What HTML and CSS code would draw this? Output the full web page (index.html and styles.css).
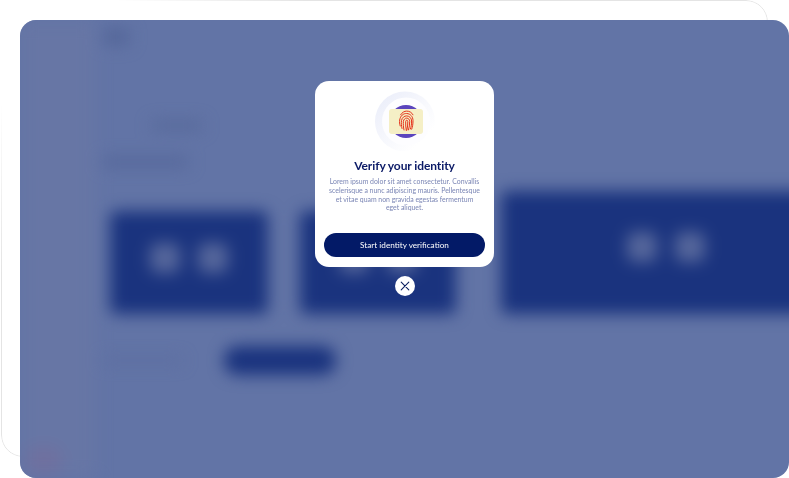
FILE: index.html
```html
<!DOCTYPE html>
<html lang="en">
<head>
<meta charset="utf-8">
<title>Verify your identity</title>
<link rel="stylesheet" href="styles.css">
</head>
<body>
<div class="frame"></div>
<div class="panel">
  <div class="scene" aria-hidden="true">
    <div class="side"><div class="side-dot"></div></div>
    <div class="main">
      <div class="logo"></div>
      <div class="tab"></div>
      <div class="heading"></div>
      <div class="cards">
        <div class="card card-one"><i></i><i></i></div>
        <div class="card card-two"><i></i><i></i></div>
        <div class="card card-three"><i></i><i></i></div>
      </div>
      <div class="actions">
        <div class="hint"></div>
        <div class="cta"></div>
      </div>
    </div>
  </div>
  <div class="dialog-wrap">
    <section class="dialog">
      <div class="badge">
        <svg class="badge-art" viewBox="0 0 60 60" width="60" height="60" aria-hidden="true">
          <defs>
            <linearGradient id="halo" x1="0" y1="0" x2="1" y2="1">
              <stop offset="0" stop-color="#e9ecf9"/>
              <stop offset=".8" stop-color="#ffffff"/>
            </linearGradient>
          </defs>
          <circle cx="30" cy="30.5" r="30" fill="url(#halo)"/>
          <circle cx="31" cy="30.5" r="24" fill="#fdfdff"/>
          <circle cx="31" cy="30.5" r="16.5" fill="#5b45bd"/>
          <rect x="14" y="18" width="34" height="25" rx="3" fill="#f5efc6"/>
          <g fill="none" stroke="#e5331c" stroke-width="1" stroke-linecap="round">
            <path d="M25.200 35c-.7-2-.8-4-.5-6 .6-4.200 3.700-6.700 7-6.500 3.600.2 6.300 3 6.300 7.200 0 3.300-.4 6-1.300 8.500"/>
            <path d="M27 37.500c-.6-2.800-.9-5.300-.5-8 .5-2.800 2.800-4.800 5.300-4.600 2.700.2 4.800 2.300 4.800 5.100 0 3-.3 5.500-1.200 8"/>
            <path d="M29 39c-.6-2.800-.9-5.700-.6-8.700.3-1.900 1.700-3.300 3.300-3.200 1.800.1 3 1.500 3 3.300 0 3.200-.4 5.800-1.200 8.500"/>
            <path d="M31.300 39.500c-.5-3-.8-6-.6-9 .1-.9.5-1.300 1-1.300.7 0 1.100.6 1.100 1.400 0 3-.3 5.800-.9 8.300"/>
            <path d="M25.600 23.800c1.500-2.400 3.800-3.700 6.100-3.700 2.700 0 5 1.300 6.300 3.700"/>
          </g>
        </svg>
      </div>
      <h1 class="title">Verify your identity</h1>
      <p class="copy">Lorem ipsum dolor sit amet consectetur. Convallis<br>scelerisque a nunc adipiscing mauris. Pellentesque<br>et vitae quam non gravida egestas fermentum<br>eget aliquet.</p>
      <button class="start" type="button">Start identity verification</button>
    </section>
    <button class="close" type="button" aria-label="Close">
      <svg viewBox="0 0 10 10" width="10" height="10" aria-hidden="true"><path d="M1.200 1.200l7.600 7.600M8.800 1.200l-7.600 7.600" fill="none" stroke="#0b1f5f" stroke-width="1.100" stroke-linecap="round"/></svg>
    </button>
  </div>
</div>
</body>
</html>
```
FILE: styles.css
```css
* { box-sizing: border-box; }
html, body { margin: 0; height: 100%; }
body {
  background: #fff;
  width: 789px;
  height: 478px;
  overflow: hidden;
  padding: 20px 0 0 20px;
  position: relative;
  font-family: "Lato", "Noto Sans", sans-serif;
}
.frame {
  position: absolute;
  left: 1px;
  top: 0;
  width: 767px;
  height: 457px;
  border: 1.5px solid #e4e4e4;
  border-radius: 22px;
  -webkit-mask-image: linear-gradient(138deg, transparent 9%, #000 24%);
  mask-image: linear-gradient(138deg, transparent 9%, #000 24%);
}
.panel {
  position: relative;
  width: 769px;
  height: 458px;
  border-radius: 16px;
  overflow: hidden;
  background: #6274a6;
}
.scene {
  position: absolute;
  inset: 0;
  display: flex;
  filter: blur(8px);
}
.side {
  width: 75px;
  flex: none;
  background: #6776a5;
  display: flex;
  flex-direction: column;
  justify-content: flex-end;
  padding: 0 0 4px 6px;
}
.side-dot {
  width: 36px;
  height: 28px;
  border-radius: 12px;
  background: #6f709f;
}
.main {
  flex: 1;
  min-width: 0;
  padding: 9px 0 0 5px;
  display: flex;
  flex-direction: column;
}
.logo {
  width: 26px;
  height: 16px;
  margin-left: 3px;
  background: #546699;
}
.tab {
  width: 50px;
  height: 9px;
  margin: 76px 0 0 52px;
  background: #566899;
}
.heading {
  width: 86px;
  height: 10px;
  margin: 27px 0 0 2px;
  background: #55679a;
}
.cards {
  display: flex;
  align-items: flex-end;
  height: 123px;
  margin-top: 24px;
  padding-left: 10px;
}
.card {
  height: 103px;
  padding-bottom: 10px;
  background: #1a337e;
  border-radius: 6px;
  display: flex;
  align-items: center;
  justify-content: center;
  gap: 18px;
  flex: none;
}
.card i {
  width: 30px;
  height: 30px;
  background: #55669b;
  border-radius: 8px;
}
.card-one { width: 158px; }
.card-two { width: 156px; margin-left: 32px; }
.card-three { width: 330px; height: 123px; margin-left: 45px; padding-bottom: 12px; }
.actions {
  display: flex;
  align-items: center;
  margin-top: 32px;
  padding-left: 2px;
}
.hint {
  width: 80px;
  height: 5px;
  background: #5a6b9e;
}
.cta {
  width: 112px;
  height: 29px;
  margin-left: 42px;
  background: #1a337e;
  border-radius: 14px;
}
.dialog-wrap {
  position: relative;
  display: flex;
  flex-direction: column;
  align-items: center;
  padding-top: 61px;
  gap: 9px;
}
.dialog {
  width: 179px;
  height: 186px;
  background: #fff;
  border-radius: 14px;
  padding: 10px 9px 10px;
  display: flex;
  flex-direction: column;
  align-items: center;
  will-change: transform;
}
.badge {
  height: 61px;
  flex: none;
}
.badge-art { display: block; }
.title {
  margin: 6px 0 0;
  font-size: 12px;
  line-height: 16px;
  font-weight: 700;
  letter-spacing: -0.1px;
  color: #0b1a66;
  white-space: nowrap;
}
.copy {
  margin: 3px 0 0;
  font-size: 6.900px;
  line-height: 8.800px;
  text-align: center;
  white-space: nowrap;
  color: #7b86b5;
}
.start {
  margin-top: auto;
  width: 161px;
  height: 24px;
  border: 0;
  padding: 0;
  border-radius: 12px;
  background: #031a67;
  color: #fff;
  font: 400 8.200px/24px "Lato", "Noto Sans", sans-serif;
}
.close {
  width: 20px;
  height: 20px;
  border: 0;
  padding: 0;
  border-radius: 50%;
  background: #fff;
  display: flex;
  align-items: center;
  justify-content: center;
}
```
